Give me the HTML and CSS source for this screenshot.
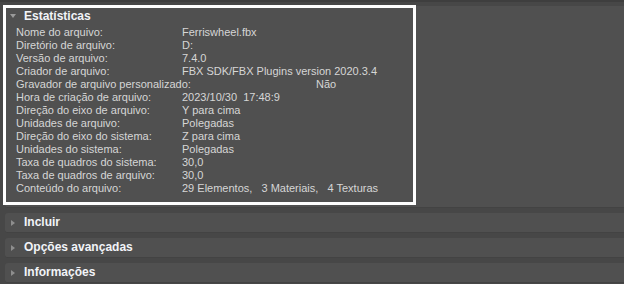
FILE: index.html
```html
<!DOCTYPE html>
<html lang="pt">
<head>
    <meta charset="UTF-8">
    <title>Estatísticas</title>
    <link rel="stylesheet" href="styles.css">
</head>
<body>
<div id="wrapper">
    <div class="rollout open">
        <div class="head"><span class="arrow down"></span>Estatísticas</div>
        <div class="stats">
            <div class="row"><span class="lbl">Nome do arquivo:</span><span class="val">Ferriswheel.fbx</span></div>
            <div class="row"><span class="lbl">Diretório de arquivo:</span><span class="val">D:</span></div>
            <div class="row"><span class="lbl">Versão de arquivo:</span><span class="val">7.4.0</span></div>
            <div class="row"><span class="lbl">Criador de arquivo:</span><span class="val">FBX SDK/FBX Plugins version 2020.3.4</span></div>
            <div class="row"><span class="lbl">Gravador de arquivo personalizado:</span><span class="val far">Não</span></div>
            <div class="row"><span class="lbl">Hora de criação de arquivo:</span><span class="val">2023/10/30  17:48:9</span></div>
            <div class="row"><span class="lbl">Direção do eixo de arquivo:</span><span class="val">Y para cima</span></div>
            <div class="row"><span class="lbl">Unidades de arquivo:</span><span class="val">Polegadas</span></div>
            <div class="row"><span class="lbl">Direção do eixo do sistema:</span><span class="val">Z para cima</span></div>
            <div class="row"><span class="lbl">Unidades do sistema:</span><span class="val">Polegadas</span></div>
            <div class="row"><span class="lbl">Taxa de quadros do sistema:</span><span class="val">30,0</span></div>
            <div class="row"><span class="lbl">Taxa de quadros de arquivo:</span><span class="val">30,0</span></div>
            <div class="row"><span class="lbl">Conteúdo do arquivo:</span><span class="val">29 Elementos,   3 Materiais,   4 Texturas</span></div>
        </div>
        <div class="mark"></div>
    </div>
    <div class="rollout"><div class="head"><span class="arrow"></span>Incluir</div></div>
    <div class="rollout"><div class="head"><span class="arrow"></span>Opções avançadas</div></div>
    <div class="rollout"><div class="head"><span class="arrow"></span>Informações</div></div>
</div>
</body>
</html>
```

FILE: styles.css
```css
html, body{
    margin: 0px;
    padding: 0px;
}
body{
    background: #474747;
    font-family: "Liberation Sans", Arial, sans-serif;
    font-size: 11px;
    color: #d6d6d6;
    border-top: 2px solid #3e3e3e;
}

#wrapper{
    padding: 4px 0 0 5px;
}
.rollout{
    background: #505050;
    border-radius: 3px 0 0 3px;
    margin-bottom: 5px;
    border-bottom: 1px solid #434343;
}
.rollout.open{
    position: relative;
    padding-bottom: 12px;
}
.head{
    height: 19px;
    line-height: 19px;
    font-size: 12px;
    font-weight: bold;
    color: #f2f4f8;
    display: flex;
    align-items: center;
}
.open .head{
    height: 20px;
    line-height: 20px;
}
.arrow{
    width: 0px;
    height: 0px;
    margin: 0 9px 0 6px;
    border-top: 3px solid transparent;
    border-bottom: 3px solid transparent;
    border-left: 4px solid #8e8e8e;
}
.arrow.down{
    margin: 0 8px 0 5px;
    border-left: 3px solid transparent;
    border-right: 3px solid transparent;
    border-top: 4px solid #9a9a9a;
    border-bottom: 0px;
}
.stats{
    padding-left: 11px;
}
.row{
    display: grid;
    grid-template-columns: 166px 1fr;
    height: 13px;
    line-height: 13px;
    white-space: pre;
}
.lbl{
    white-space: nowrap;
}
.val.far{
    margin-left: 134px;
}
.mark{
    position: absolute;
    left: -2px;
    top: -1px;
    width: 407px;
    height: 194px;
    border: 3px solid #ffffff;
}
```
